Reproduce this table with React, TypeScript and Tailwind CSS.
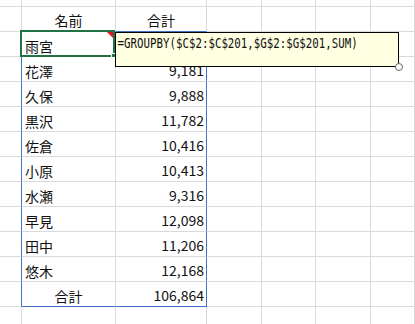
import React from "react";

type Row = {
    name: string;
    total: string;
};

const rows: Row[] = [
    { name: "雨宮", total: "10,396" },
    { name: "花澤", total: "9,181" },
    { name: "久保", total: "9,888" },
    { name: "黒沢", total: "11,782" },
    { name: "佐倉", total: "10,416" },
    { name: "小原", total: "10,413" },
    { name: "水瀬", total: "9,316" },
    { name: "早見", total: "12,098" },
    { name: "田中", total: "11,206" },
    { name: "悠木", total: "12,168" },
];

const cell = "border-r border-b border-[#dadada] flex items-center min-w-0 overflow-hidden";
const text = "text-[14px] leading-none text-[#111] whitespace-nowrap";

const EmptyCells = ({ count }: { count: number }) => (
    <>
        {Array.from({ length: count }).map((_, index) => (
            <div key={index} className={cell} />
        ))}
    </>
);

const FORMULA = "=GROUPBY($C$2:$C$201,$G$2:$G$201,SUM)";

export default function App() {
    return (
        <div
            className="relative w-[415px] h-[324px] overflow-hidden bg-white"
            style={{ fontFamily: '"Noto Sans CJK JP", "Noto Sans", sans-serif' }}
        >
            <div className="grid grid-cols-[22px_94px_91px_55px_54px_55px_1fr] grid-rows-[7px_repeat(13,25px)]">
                {/* row above the header, cut off at the top */}
                <EmptyCells count={7} />

                {/* header */}
                <div className={cell} />
                <div className={`${cell} justify-center border-b-[#4472c4] pt-[2px]`}>
                    <span className={text}>名前</span>
                </div>
                <div className={`${cell} justify-center border-b-[#4472c4] pt-[2px]`}>
                    <span className={text}>合計</span>
                </div>
                <EmptyCells count={4} />

                {rows.map((row, index) => (
                    <React.Fragment key={row.name}>
                        <div className={`${cell} border-r-[#4472c4]`} />
                        <div className={`${cell} pl-[3px] pt-[3px]`}>
                            <span className={text}>{row.name}</span>
                        </div>
                        <div className={`${cell} justify-end pr-[2px] pt-[2px] border-r-[#4472c4]`}>
                            {/* the first total sits under the comment */}
                            {index > 0 && <span className={text}>{row.total}</span>}
                        </div>
                        <EmptyCells count={4} />
                    </React.Fragment>
                ))}

                {/* total */}
                <div className={`${cell} border-r-[#4472c4]`} />
                <div className={`${cell} justify-center pt-[3px] border-b-[#4472c4]`}>
                    <span className={text}>合計</span>
                </div>
                <div className={`${cell} justify-end pr-[2px] pt-[2px] border-r-[#4472c4] border-b-[#4472c4]`}>
                    <span className={text}>106,864</span>
                </div>
                <EmptyCells count={4} />

                <EmptyCells count={7} />
            </div>

            {/* active cell */}
            <div className="absolute left-[20px] top-[30px] w-[95px] h-[27px] border-2 border-[#217346]">
                <div className="absolute top-0 right-0 w-0 h-0 border-t-[6px] border-l-[6px] border-t-[#e81123] border-l-transparent" />
                <div className="absolute -right-[3px] -bottom-[3px] w-[5px] h-[5px] bg-[#217346] border border-white" />
            </div>

            {/* comment */}
            <div className="absolute left-[115px] top-[32px] w-[284px] h-[35px] border border-black bg-[#ffffe1]">
                <div className="pl-[2px] pt-[3px] origin-left scale-x-[0.77] whitespace-nowrap text-[14px] leading-[14px] text-[#111]" style={{ fontFamily: '"DejaVu Sans Mono", monospace' }}>
                    {FORMULA}
                </div>
                <div className="absolute -right-[5px] -bottom-[5px] w-[8px] h-[8px] rounded-full border border-[#666] bg-white" />
            </div>
        </div>
    );
}
